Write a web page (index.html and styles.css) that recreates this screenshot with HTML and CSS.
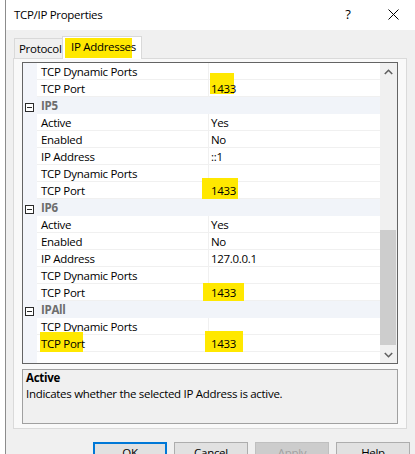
FILE: index.html
```html
<!DOCTYPE html>
<html>
<head>
<meta charset="utf-8">
<link rel="stylesheet" href="styles.css">
</head>
<body>
<div class="window">
  <div class="titlebar">
    <span class="title">TCP/IP Properties</span>
    <span class="tbtn help">?</span>
    <span class="tbtn close"><svg width="11" height="11" viewBox="0 0 11 11"><path d="M0.5 0.5 L10.5 10.5 M10.5 0.5 L0.5 10.5" stroke="#000" stroke-width="1" fill="none"/></svg></span>
  </div>
  <div class="client">
    <div class="tabs">
      <div class="tab">Protocol</div>
      <div class="tab active"><span class="mark">IP Addresses</span></div>
    </div>
    <div class="panel">
      <div class="grid">
        <div class="rows">
          <div class="row"><span class="gut"></span><span class="name">TCP Dynamic Ports</span><span class="val"></span></div>
          <div class="row"><span class="gut"></span><span class="name">TCP Port</span><span class="val"><span class="hl hl1">1433</span></span></div>
          <div class="row cat"><span class="gut"><span class="minus"></span></span><span class="name">IP5</span><span class="val"></span></div>
          <div class="row"><span class="gut"></span><span class="name">Active</span><span class="val">Yes</span></div>
          <div class="row"><span class="gut"></span><span class="name">Enabled</span><span class="val">No</span></div>
          <div class="row"><span class="gut"></span><span class="name">IP Address</span><span class="val">::1</span></div>
          <div class="row"><span class="gut"></span><span class="name">TCP Dynamic Ports</span><span class="val"></span></div>
          <div class="row"><span class="gut"></span><span class="name">TCP Port</span><span class="val"><span class="hl hl2">1433</span></span></div>
          <div class="row cat"><span class="gut"><span class="minus"></span></span><span class="name">IP6</span><span class="val"></span></div>
          <div class="row"><span class="gut"></span><span class="name">Active</span><span class="val">Yes</span></div>
          <div class="row"><span class="gut"></span><span class="name">Enabled</span><span class="val">No</span></div>
          <div class="row"><span class="gut"></span><span class="name">IP Address</span><span class="val">127.0.0.1</span></div>
          <div class="row"><span class="gut"></span><span class="name">TCP Dynamic Ports</span><span class="val"></span></div>
          <div class="row"><span class="gut"></span><span class="name">TCP Port</span><span class="val"><span class="hl hl3">1433</span></span></div>
          <div class="row cat"><span class="gut"><span class="minus"></span></span><span class="name">IPAll</span><span class="val"></span></div>
          <div class="row"><span class="gut"></span><span class="name">TCP Dynamic Ports</span><span class="val"></span></div>
          <div class="row"><span class="gut"></span><span class="name"><span class="hl hl5">TCP Port</span></span><span class="val"><span class="hl hl4">1433</span></span></div>
          <div class="filler"><span class="gut"></span></div>
        </div>
        <div class="scrollbar">
          <div class="sbtn"><svg width="9" height="6" viewBox="0 0 9 6"><path d="M0.8 5 L4.5 1.3 L8.2 5" stroke="#606060" stroke-width="1.6" fill="none"/></svg></div>
          <div class="track"><div class="thumb"></div></div>
          <div class="sbtn"><svg width="9" height="6" viewBox="0 0 9 6"><path d="M0.8 1 L4.5 4.7 L8.2 1" stroke="#606060" stroke-width="1.6" fill="none"/></svg></div>
        </div>
      </div>
      <div class="desc">
        <div class="dtitle">Active</div>
        <div class="dtext">Indicates whether the selected IP Address is active.</div>
      </div>
    </div>
    <div class="buttons">
      <div class="btn default">OK</div>
      <div class="btn">Cancel</div>
      <div class="btn disabled">Apply</div>
      <div class="btn">Help</div>
    </div>
  </div>
</div>
</body>
</html>
```
FILE: styles.css
```css
html, body {
  margin: 0;
  padding: 0;
  background: #ffffff;
  width: 415px;
  height: 454px;
  overflow: hidden;
}
body {
  font-family: "Open Sans", "Noto Sans", sans-serif;
  font-size: 11.5px;
  letter-spacing: -0.3px;
  color: #000;
}
.window {
  margin-left: 5px;
  border-left: 1px solid #8c8c8c;
  height: 454px;
  background: #f0f0f0;
  display: flex;
  flex-direction: column;
}
.titlebar {
  height: 30px;
  background: #ffffff;
  display: flex;
  align-items: center;
}
.title {
  flex: 1;
  padding-left: 8px;
  font-size: 11.5px;
  padding-bottom: 1px;
}
.tbtn {
  width: 46px;
  height: 30px;
  display: flex;
  align-items: center;
  justify-content: center;
}
.help {
  font-size: 13px;
  padding-left: 4px;
  box-sizing: border-box;
  padding-bottom: 2px;
}
.close svg { display: block; margin-left: 2px; margin-top: -1px; }
.client {
  flex: 1;
  display: flex;
  flex-direction: column;
}
.tabs {
  margin-top: 6px;
  padding-left: 8px;
  display: flex;
  align-items: flex-end;
  height: 22px;
  position: relative;
  z-index: 2;
}
.tab {
  height: 20px;
  box-sizing: border-box;
  border: 1px solid #d9d9d9;
  border-bottom: none;
  border-right: none;
  width: 48px;
  padding-left: 4px;
  line-height: 19px;
  background: #f0f0f0;
}
.tab.active {
  height: 23px;
  width: 80px;
  margin-bottom: -1px;
  border-right: 1px solid #d9d9d9;
  background: #ffffff;
  padding: 1px 0 0 2px;
}
.mark {
  display: block;
  width: 67px;
  height: 20px;
  background: #ffe800;
  padding-left: 6px;
  box-sizing: border-box;
  line-height: 18px;
  white-space: nowrap;
}
.panel {
  margin-left: 7px;
  width: 394px;
  box-sizing: border-box;
  border: 1px solid #dadada;
  background: #f9f9f9;
  padding: 3px 8px 4px 8px;
  position: relative;
  z-index: 1;
}
.grid {
  border: 1px solid #646464;
  height: 302px;
  box-sizing: border-box;
  display: flex;
  background: #ffffff;
}
.rows {
  flex: 1;
  display: flex;
  flex-direction: column;
}
.row {
  display: grid;
  grid-template-columns: 14px 172px 1fr;
  height: 17px;
  line-height: 14px;
}
.row .gut {
  background: #f3f5fa;
  position: relative;
}
.row .name {
  border-right: 1px solid #f0f0f0;
  border-bottom: 1px solid #f0f0f0;
  padding: 2px 0 0 4px;
  white-space: nowrap;
  position: relative;
}
.row .val {
  border-bottom: 1px solid #f0f0f0;
  padding: 2px 0 0 2px;
  position: relative;
}
.row.cat .name,
.row.cat .val {
  background: #f1f4f9;
  border-right-color: #f1f4f9;
  border-bottom-color: #f1f4f9;
}
.row.cat .name {
  font-weight: bold;
  color: #6d6d6d;
}
.minus {
  position: absolute;
  left: 2px;
  top: 6px;
  width: 9px;
  height: 9px;
  box-sizing: border-box;
  border: 1px solid #2b2b2b;
  background: #fff;
}
.minus::after {
  content: "";
  position: absolute;
  left: 1px;
  top: 3px;
  width: 5px;
  height: 1px;
  background: #2b2b2b;
}
.filler {
  flex: 1;
  display: grid;
  grid-template-columns: 14px 1fr;
}
.filler .gut { background: #f3f5fa; }
.hl {
  display: inline-block;
  vertical-align: top;
  line-height: 14px;
  position: relative;
  z-index: 0;
}
.hl::before {
  content: "";
  position: absolute;
  background: #ffe800;
  z-index: -1;
}
.hl1::before { left: -1px; width: 24px; top: -9px; height: 21px; }
.hl2::before { left: -9px; width: 36px; top: -6px; height: 21px; }
.hl3::before { left: -8px; width: 41px; top: -3px; height: 21px; }
.hl4::before { left: -6px; width: 38px; top: -6px; height: 21px; }
.hl5::before { left: -1px; width: 43px; top: -5px; height: 20px; }
.scrollbar {
  width: 17px;
  background: #f0f0f0;
  display: flex;
  flex-direction: column;
}
.sbtn {
  height: 17px;
  display: flex;
  align-items: center;
  justify-content: center;
}
.sbtn svg { display: block; }
.track {
  flex: 1;
  display: flex;
  flex-direction: column;
}
.thumb {
  margin-top: 150px;
  height: 115px;
  width: 16px;
  background: #cdcdcd;
}
.desc {
  margin-top: 5px;
  height: 55px;
  box-sizing: border-box;
  border: 1px solid #a0a0a0;
  background: #f0f0f0;
  padding-left: 3px;
  line-height: 16px;
}
.dtitle { font-weight: bold; }
.buttons {
  margin-top: 13px;
  padding-left: 87px;
  display: flex;
  gap: 7px;
}
.btn {
  width: 74px;
  height: 23px;
  box-sizing: border-box;
  border: 1px solid #adadad;
  background: #e1e1e1;
  text-align: center;
  line-height: 20px;
}
.btn.default {
  border: 2px solid #0078d7;
  line-height: 18px;
}
.btn.disabled {
  background: #cccccc;
  border-color: #bfbfbf;
  color: #a0a0a0;
}
```
